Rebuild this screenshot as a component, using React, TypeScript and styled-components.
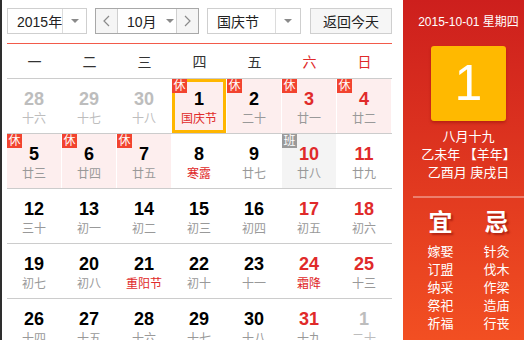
import styled, { createGlobalStyle, css } from 'styled-components';

const GlobalStyle = createGlobalStyle`
  html, body {
    margin: 0;
    padding: 0;
    overflow: hidden;
    background: #fff;
  }
  body {
    font-family: "Liberation Sans", "Noto Sans CJK SC", sans-serif;
  }
`;

const RED = '#e02a2a';

type Kind = 'normal' | 'weekend' | 'other';

interface Day {
  num: number;
  lunar: string;
  kind?: Kind;
  festival?: boolean;
  badge?: '休' | '班';
  selected?: boolean;
}

const weeks: Day[][] = [
  [
    { num: 28, lunar: '十六', kind: 'other' },
    { num: 29, lunar: '十七', kind: 'other' },
    { num: 30, lunar: '十八', kind: 'other' },
    { num: 1, lunar: '国庆节', festival: true, badge: '休', selected: true },
    { num: 2, lunar: '二十', badge: '休' },
    { num: 3, lunar: '廿一', kind: 'weekend', badge: '休' },
    { num: 4, lunar: '廿二', kind: 'weekend', badge: '休' },
  ],
  [
    { num: 5, lunar: '廿三', badge: '休' },
    { num: 6, lunar: '廿四', badge: '休' },
    { num: 7, lunar: '廿五', badge: '休' },
    { num: 8, lunar: '寒露', festival: true },
    { num: 9, lunar: '廿七' },
    { num: 10, lunar: '廿八', kind: 'weekend', badge: '班' },
    { num: 11, lunar: '廿九', kind: 'weekend' },
  ],
  [
    { num: 12, lunar: '三十' },
    { num: 13, lunar: '初一' },
    { num: 14, lunar: '初二' },
    { num: 15, lunar: '初三' },
    { num: 16, lunar: '初四' },
    { num: 17, lunar: '初五', kind: 'weekend' },
    { num: 18, lunar: '初六', kind: 'weekend' },
  ],
  [
    { num: 19, lunar: '初七' },
    { num: 20, lunar: '初八' },
    { num: 21, lunar: '重阳节', festival: true },
    { num: 22, lunar: '初十' },
    { num: 23, lunar: '十一' },
    { num: 24, lunar: '霜降', kind: 'weekend', festival: true },
    { num: 25, lunar: '十三', kind: 'weekend' },
  ],
  [
    { num: 26, lunar: '十四' },
    { num: 27, lunar: '十五' },
    { num: 28, lunar: '十六' },
    { num: 29, lunar: '十七' },
    { num: 30, lunar: '十八' },
    { num: 31, lunar: '十九', kind: 'weekend' },
    { num: 1, lunar: '二十', kind: 'other' },
  ],
];

const weekdays = ['一', '二', '三', '四', '五', '六', '日'];
const yi = ['嫁娶', '订盟', '纳采', '祭祀', '祈福'];
const ji = ['针灸', '伐木', '作梁', '造庙', '行丧'];

const Page = styled.div`
  display: flex;
  width: 536px;
  height: 340px;
  border-left: 2px solid #2e2e2e;
`;

const Main = styled.div`
  flex-shrink: 0;
  width: 385px;
  padding-left: 5px;
  margin-right: 11px;
`;

const Toolbar = styled.div`
  display: flex;
  align-items: flex-start;
  gap: 8px;
  height: 35px;
  padding-top: 8px;
  border-bottom: 1px solid #f25a4a;
`;

const SelectBox = styled.div<{ $w: number }>`
  box-sizing: border-box;
  display: flex;
  width: ${(p) => p.$w}px;
  height: 26px;
  border: 1px solid #cfcfcf;
  background: #fff;
  font-size: 14px;
  color: #222;
`;

const SelectText = styled.div`
  flex: 1;
  display: flex;
  align-items: center;
  padding-left: 9px;
  white-space: nowrap;
`;

const SelectArrow = styled.div`
  flex-shrink: 0;
  width: 24px;
  display: flex;
  align-items: center;
  justify-content: center;
  border-left: 1px solid #dcdcdc;
`;

const Caret = styled.span`
  width: 0;
  height: 0;
  border-left: 4px solid transparent;
  border-right: 4px solid transparent;
  border-top: 4px solid #8a8a8a;
`;

const MonthGroup = styled.div`
  box-sizing: border-box;
  display: flex;
  width: 104px;
  height: 26px;
  border: 1px solid #a8a8a8;
  font-size: 14px;
  color: #222;
`;

const NavBtn = styled.div<{ $side: 'l' | 'r' }>`
  width: 21px;
  display: flex;
  align-items: center;
  justify-content: center;
  background: #f5f5f5;
  ${(p) =>
    p.$side === 'l'
      ? css`border-right: 1px solid #cfcfcf;`
      : css`border-left: 1px solid #cfcfcf;`}
`;

const MonthText = styled.div`
  flex: 1;
  display: flex;
  align-items: center;
  gap: 9px;
  padding-left: 9px;
  white-space: nowrap;
`;

const TodayBtn = styled.div`
  box-sizing: border-box;
  width: 82px;
  height: 26px;
  margin-left: 1px;
  border: 1px solid #cfcfcf;
  background: #f6f6f6;
  display: flex;
  align-items: center;
  justify-content: center;
  font-size: 14px;
  color: #222;
`;

const WeekHeader = styled.div`
  display: grid;
  grid-template-columns: repeat(7, 55px);
  height: 34px;
  border-bottom: 1px solid #cccccc;
`;

const WeekLabel = styled.div<{ $red: boolean }>`
  display: flex;
  align-items: center;
  justify-content: center;
  font-size: 14px;
  color: ${(p) => (p.$red ? RED : '#333')};
`;

const Row = styled.div`
  display: grid;
  grid-template-columns: repeat(7, 55px);
  height: 54px;
  border-bottom: 1px solid #cccccc;
`;

const Cell = styled.div<{ $bg: string; $selected: boolean }>`
  position: relative;
  box-sizing: border-box;
  border-right: 1px solid #fff;
  background: ${(p) => p.$bg};
  background-clip: padding-box;
  padding-top: 9px;
  text-align: center;
  ${(p) =>
    p.$selected &&
    css`
      box-shadow: inset 0 0 0 3px #ffb600;
    `}
`;

const Num = styled.div<{ $kind: Kind }>`
  font-size: 18px;
  line-height: 22px;
  font-weight: bold;
  color: ${(p) => (p.$kind === 'other' ? '#bdbdbd' : p.$kind === 'weekend' ? RED : '#000')};
`;

const Lunar = styled.div<{ $color: string }>`
  font-size: 12px;
  line-height: 18px;
  color: ${(p) => p.$color};
`;

const Badge = styled.span<{ $work: boolean }>`
  position: absolute;
  top: 0;
  left: 0;
  width: 15px;
  height: 14px;
  background: ${(p) => (p.$work ? '#9a9a9a' : '#f2432f')};
  color: #fff;
  font-size: 12px;
  line-height: 14px;
  text-align: center;
`;

const Side = styled.div`
  flex-shrink: 0;
  width: 131px;
  height: 340px;
  background: linear-gradient(to bottom, #cd1f1d, #f24f22);
  color: #fff;
  text-align: center;
  padding-top: 14px;
  box-sizing: border-box;
`;

const DateLine = styled.div`
  font-size: 12px;
  line-height: 16px;
  white-space: nowrap;
`;

const BigDay = styled.div`
  width: 75px;
  height: 75px;
  margin: 16px auto 0;
  background: #ffb900;
  border-radius: 3px;
  box-shadow: 0 2px 3px rgba(120, 0, 0, 0.35);
  font-size: 50px;
  line-height: 75px;
  font-family: "Liberation Sans", sans-serif;
`;

const LunarInfo = styled.div`
  margin-top: 7px;
  font-size: 13px;
  line-height: 18px;
  white-space: nowrap;
`;

const Separator = styled.div`
  height: 2px;
  margin: 14px 10px 0;
  background: rgba(255, 255, 255, 0.35);
`;

const YiJi = styled.div`
  display: grid;
  grid-template-columns: 56px 56px;
  justify-content: center;
  margin-top: 10px;
`;

const YiJiCol = styled.div`
  display: flex;
  flex-direction: column;
  align-items: center;
`;

const YiJiTitle = styled.div`
  font-size: 24px;
  line-height: 30px;
  font-weight: bold;
  text-shadow: 2px 2px 2px rgba(110, 0, 0, 0.45);
  margin-bottom: 5px;
`;

const YiJiItem = styled.div`
  font-size: 13px;
  line-height: 18px;
`;

function Chevron({ dir }: { dir: 'l' | 'r' }) {
  return (
    <svg width="7" height="12" viewBox="0 0 7 12">
      <polyline
        points={dir === 'l' ? '6,1 1,6 6,11' : '1,1 6,6 1,11'}
        fill="none"
        stroke="#8a8a8a"
        strokeWidth="1.2"
      />
    </svg>
  );
}

function DayCell({ day }: { day: Day }) {
  const kind = day.kind ?? 'normal';
  let bg = '#fff';
  if (day.badge === '休') bg = '#fdeeee';
  if (day.badge === '班') bg = '#f4f4f4';
  const lunarColor = day.festival ? RED : kind === 'other' ? '#bdbdbd' : '#999';
  return (
    <Cell $bg={bg} $selected={!!day.selected}>
      {day.badge && <Badge $work={day.badge === '班'}>{day.badge}</Badge>}
      <Num $kind={kind}>{day.num}</Num>
      <Lunar $color={lunarColor}>{day.lunar}</Lunar>
    </Cell>
  );
}

export default function App() {
  return (
    <>
      <GlobalStyle />
      <Page>
        <Main>
          <Toolbar>
            <SelectBox $w={80}>
              <SelectText>2015年</SelectText>
              <SelectArrow>
                <Caret />
              </SelectArrow>
            </SelectBox>
            <MonthGroup>
              <NavBtn $side="l">
                <Chevron dir="l" />
              </NavBtn>
              <MonthText>
                10月
                <Caret />
              </MonthText>
              <NavBtn $side="r">
                <Chevron dir="r" />
              </NavBtn>
            </MonthGroup>
            <SelectBox $w={94}>
              <SelectText>国庆节</SelectText>
              <SelectArrow>
                <Caret />
              </SelectArrow>
            </SelectBox>
            <TodayBtn>返回今天</TodayBtn>
          </Toolbar>
          <WeekHeader>
            {weekdays.map((w, i) => (
              <WeekLabel key={w} $red={i >= 5}>
                {w}
              </WeekLabel>
            ))}
          </WeekHeader>
          {weeks.map((week, r) => (
            <Row key={r}>
              {week.map((d, c) => (
                <DayCell key={c} day={d} />
              ))}
            </Row>
          ))}
        </Main>
        <Side>
          <DateLine>2015-10-01 星期四</DateLine>
          <BigDay>1</BigDay>
          <LunarInfo>
            <div>八月十九</div>
            <div>乙未年 【羊年】</div>
            <div>乙酉月 庚戌日</div>
          </LunarInfo>
          <Separator />
          <YiJi>
            <YiJiCol>
              <YiJiTitle>宜</YiJiTitle>
              {yi.map((t) => (
                <YiJiItem key={t}>{t}</YiJiItem>
              ))}
            </YiJiCol>
            <YiJiCol>
              <YiJiTitle>忌</YiJiTitle>
              {ji.map((t) => (
                <YiJiItem key={t}>{t}</YiJiItem>
              ))}
            </YiJiCol>
          </YiJi>
        </Side>
      </Page>
    </>
  );
}
